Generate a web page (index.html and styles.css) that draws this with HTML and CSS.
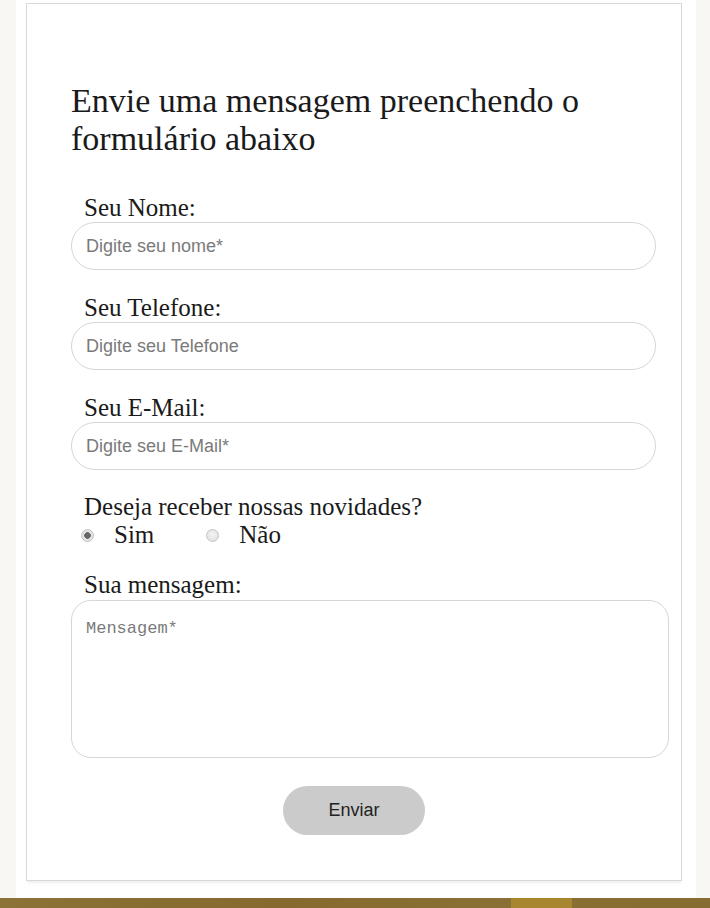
FILE: index.html
```html
<!DOCTYPE html>
<html lang="pt-BR">
<head>
<meta charset="utf-8">
<title>Contato</title>
<link rel="stylesheet" href="styles.css">
</head>
<body>
<div class="page">
  <div class="sheet">
    <form class="card">
      <h1 class="title">Envie uma mensagem preenchendo o formulário abaixo</h1>
      <label class="label" for="nome">Seu Nome:</label>
      <input class="field" id="nome" type="text" placeholder="Digite seu nome*">
      <label class="label" for="tel">Seu Telefone:</label>
      <input class="field" id="tel" type="text" placeholder="Digite seu Telefone">
      <label class="label" for="mail">Seu E-Mail:</label>
      <input class="field" id="mail" type="text" placeholder="Digite seu E-Mail*">
      <p class="label question">Deseja receber nossas novidades?</p>
      <div class="radios">
        <label class="opt"><input class="radio" type="radio" name="nov" checked><span>Sim</span></label>
        <label class="opt"><input class="radio" type="radio" name="nov"><span>Não</span></label>
      </div>
      <label class="label msg-label" for="msg">Sua mensagem:</label>
      <textarea class="area" id="msg" placeholder="Mensagem*"></textarea>
      <div class="actions">
        <button class="send" type="button">Enviar</button>
      </div>
    </form>
  </div>
  <div class="footer">
    <span class="seg seg-a"></span>
    <span class="seg seg-b"></span>
    <span class="seg seg-c"></span>
  </div>
</div>
</body>
</html>
```

FILE: styles.css
```css
* { box-sizing: border-box; }
html, body { margin: 0; padding: 0; }
body {
  background: #f8f7f4;
  font-family: "Liberation Serif", "Times New Roman", serif;
  color: #1a1a1a;
}
.page {
  width: 710px;
  height: 908px;
  display: flex;
  flex-direction: column;
  overflow: hidden;
}
.sheet {
  flex: 1;
  margin: 0 14px 0 16px;
  background: #fff;
  padding: 3px 14px 0 10px;
}
.card {
  border: 1px solid #d8d8d8;
  box-shadow: 0 3px 2px -1px #f0f0f0;
  height: 878px;
  padding: 78px 12px 0 44px;
  display: flex;
  flex-direction: column;
  align-items: flex-start;
}
.title {
  margin: 0 0 36px 0;
  font-weight: normal;
  font-size: 34px;
  line-height: 38px;
  width: 560px;
  color: #1a1a1a;
}
.label {
  display: block;
  margin: 0 0 0 13px;
  font-size: 25px;
  line-height: 28px;
  color: #1a1a1a;
}
.field {
  width: 585px;
  height: 48px;
  margin: 0 0 24px 0;
  border: 1px solid #d6d6d6;
  border-radius: 24px;
  padding: 0 14px;
  font-family: "Liberation Sans", Arial, sans-serif;
  font-size: 18px;
  color: #333;
  background: #fff;
  outline: none;
}
.field::placeholder { color: #7a7a7a; }
.question { margin-top: -1px; }
.radios {
  display: flex;
  align-items: center;
  height: 28px;
  margin: 0 0 22px 10px;
}
.opt {
  display: flex;
  align-items: center;
  font-size: 25px;
  line-height: 28px;
  margin-right: 52px;
}
.opt span { margin-left: 20px; }
.radio {
  appearance: none;
  -webkit-appearance: none;
  width: 13px;
  height: 13px;
  margin: 0;
  border-radius: 50%;
  border: 1px solid #c4c4c4;
  background: radial-gradient(circle at 50% 40%, #f4f4f4 0%, #dcdcdc 100%);
}
.radio:checked {
  background: radial-gradient(circle, #666 0 3px, #e6e6e6 3.6px, #d8d8d8 100%);
}
.msg-label { margin-bottom: 1px; }
.area {
  width: 598px;
  height: 158px;
  border: 1px solid #d6d6d6;
  border-radius: 20px;
  padding: 18px 14px;
  font-family: "Liberation Mono", "DejaVu Sans Mono", monospace;
  font-size: 17px;
  resize: none;
  outline: none;
  background: #fff;
}
.area::placeholder { color: #7a7a7a; }
.actions {
  width: 566px;
  display: flex;
  justify-content: center;
  margin-top: 28px;
}
.send {
  width: 142px;
  height: 49px;
  border: none;
  border-radius: 25px;
  background: #cbcbcb;
  font-family: "Liberation Sans", Arial, sans-serif;
  font-size: 18px;
  color: #222;
}
.footer {
  height: 10px;
  flex: none;
  display: flex;
  background: linear-gradient(90deg, #8b7236 0%, #86692f 40%, #8a7035 70%, #866c31 100%);
}
.seg-a { width: 511px; }
.seg-b { width: 61px; background: #a8852f; }
.seg-c { flex: 1; }
```
